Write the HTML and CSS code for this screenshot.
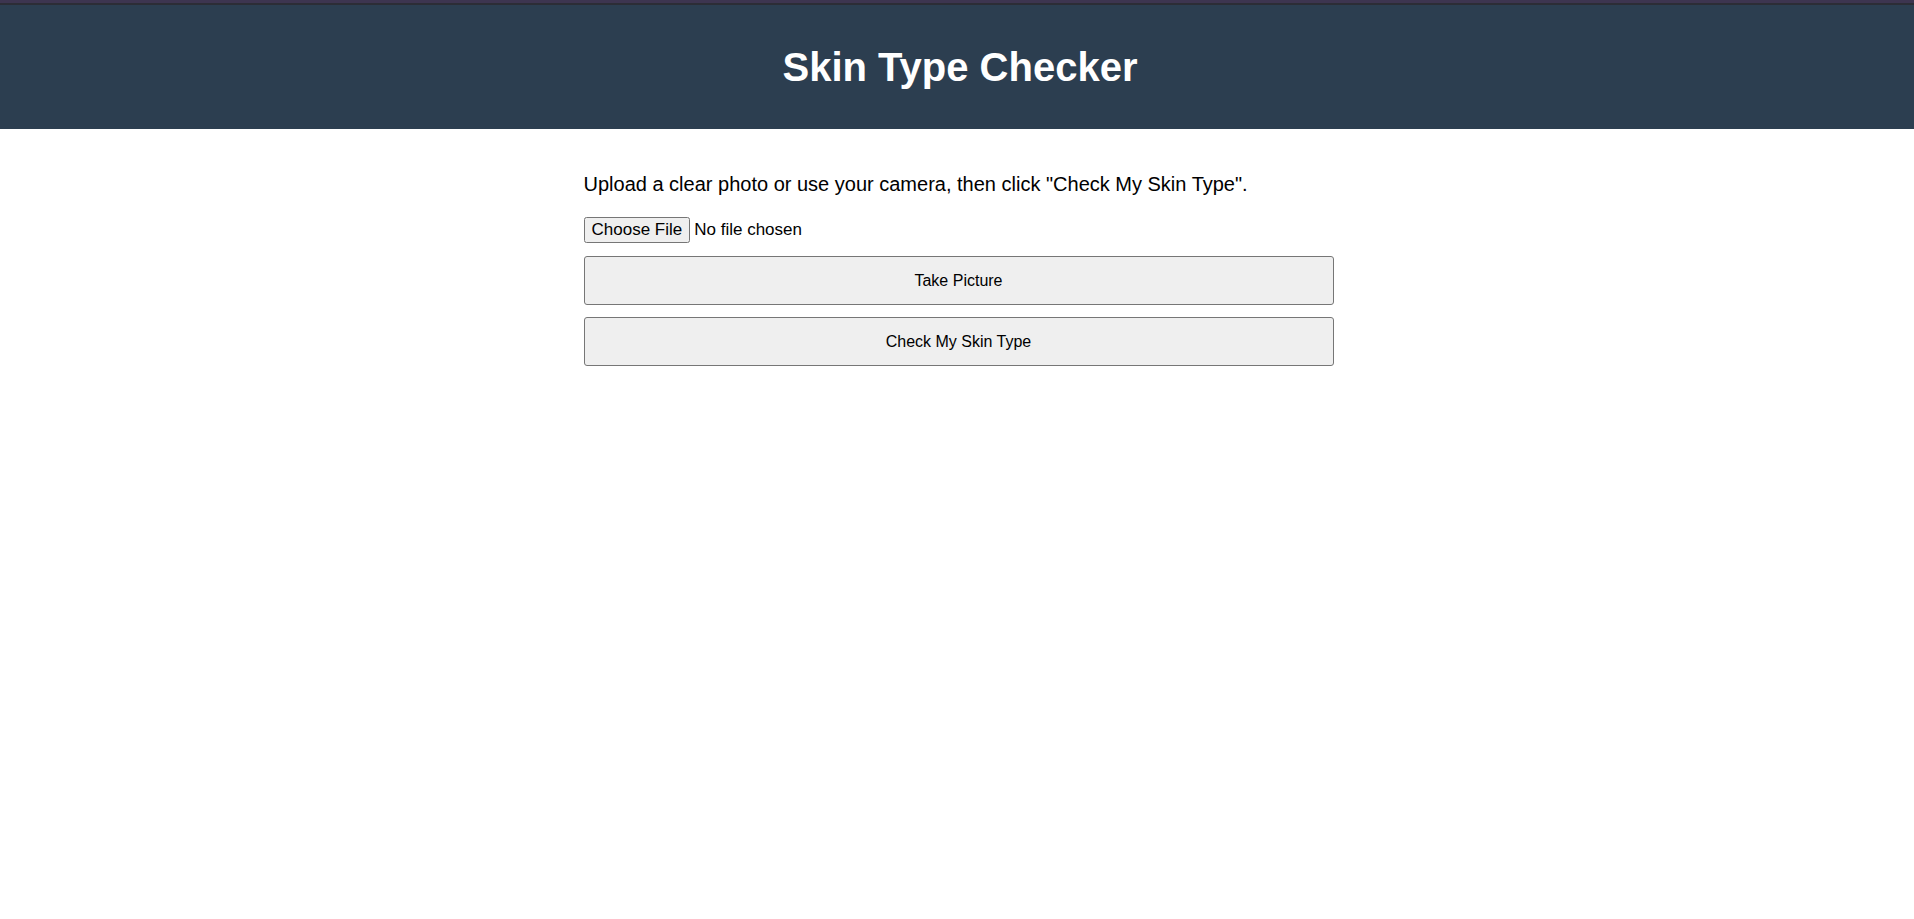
FILE: index.html
```html
<!DOCTYPE html>
<html lang="en">
<head>
  <meta charset="UTF-8" />
  <meta name="viewport" content="width=device-width, initial-scale=1.0" />
  <title>Skin Type Checker</title>
  <link rel="stylesheet" href="styles.css">
</head>
<body>
  <div class="top-strip"></div>
  <header class="header">
    <h1>Skin Type Checker</h1>
  </header>

  <main class="container">
    <p class="intro">Upload a clear photo or use your camera, then click "Check My Skin Type".</p>
    <input type="file" id="photoInput" accept="image/*" />
    <button class="action-btn" id="cameraBtn">Take Picture</button>
    <button class="action-btn" id="checkBtn">Check My Skin Type</button>
  </main>
</body>
</html>
```

FILE: styles.css
```css
body {
  margin: 0;
  font-family: "Liberation Sans", Arial, sans-serif;
  background-color: #fff;
  color: #000;
}

.top-strip {
  height: 3px;
  background-color: #3d3550;
  border-bottom: 2px solid #2c2d36;
}

.header {
  background-color: #2c3e50;
  color: #fff;
  text-align: center;
  padding: 40px 0 39px 6px;
}

.header h1 {
  margin: 0;
  font-size: 40px;
  font-weight: bold;
}

.container {
  width: 750px;
  margin: 0 auto;
  padding: 44px 0 0 3px;
  display: flex;
  flex-direction: column;
  align-items: flex-start;
}

.intro {
  margin: 0 0 21px;
  font-size: 20px;
}

.container input[type="file"] {
  font-family: "Liberation Sans", Arial, sans-serif;
  font-size: 17px;
  margin-bottom: 13px;
}

.action-btn {
  width: 100%;
  padding: 15px 14px 14px;
  margin-bottom: 12px;
  font-family: "Liberation Sans", Arial, sans-serif;
  font-size: 16px;
  color: #000;
  background-color: #efefef;
  border: 1px solid #767676;
  border-radius: 3px;
  cursor: pointer;
}
```
